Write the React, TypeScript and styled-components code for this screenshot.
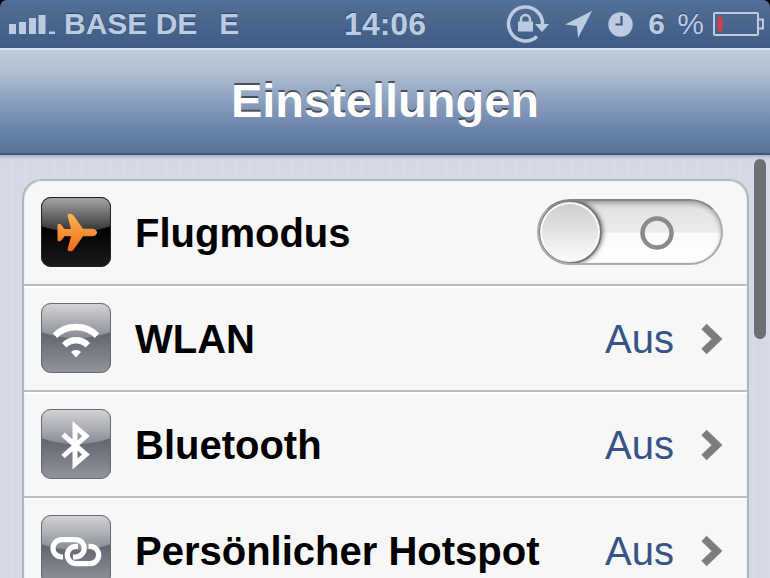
import React, { useState } from "react";
import type { ReactNode } from "react";
import styled, { createGlobalStyle } from "styled-components";

const GlobalStyle = createGlobalStyle`
  *, *::before, *::after { box-sizing: border-box; }
  body {
    margin: 0;
    background: #000;
    font-family: "Liberation Sans", Arial, sans-serif;
  }
`;

const Screen = styled.div`
  display: flex;
  flex-direction: column;
  height: 100vh;
  overflow: hidden;
`;

const StatusBar = styled.header`
  flex: none;
  display: grid;
  grid-template-columns: 1fr auto 1fr;
  align-items: center;
  height: 48px;
  padding: 0 6px;
  border-radius: 7px 7px 0 0;
  background: linear-gradient(#52719a 0%, #4f6c92 15%, #3f5c86 100%);
  color: #bccbe0;
  font-size: 30px;
  font-weight: bold;
  line-height: 48px;
  white-space: nowrap;
  text-shadow: 0 -1px 1px rgba(20, 40, 75, 0.6);

  svg { display: block; flex: none; }
`;

const StatusGroup = styled.div<{ $end?: boolean }>`
  display: flex;
  align-items: center;
  justify-content: ${(p) => (p.$end ? "flex-end" : "flex-start")};
  padding-left: ${(p) => (p.$end ? "0" : "3px")};
`;

const Carrier = styled.span`
  margin: 0 22px 0 7px;
`;

const Clock = styled.time`
  font-size: 32px;
`;

const Indicators = styled.div`
  display: flex;
  align-items: center;
  gap: 15px;
`;

const Battery = styled.div`
  display: flex;
  align-items: center;
  gap: 9px;
`;

const Percent = styled.span`
  margin-left: 4px;
  font-weight: normal;
`;

const NavBar = styled.div`
  flex: none;
  display: flex;
  align-items: center;
  justify-content: center;
  height: 107px;
  padding-bottom: 2px;
  border-top: 2px solid #d9e3f0;
  border-bottom: 2px solid #3d5880;
  background: linear-gradient(#bfccda 0%, #b3c1d3 20%, #8a9ebe 50%, #6c86ab 75%, #577399 100%);
`;

const Title = styled.h1`
  margin: 0;
  color: #fff;
  font-size: 47px;
  line-height: 56px;
  text-shadow: 0 -2px 0 rgba(60, 64, 75, 0.85);
`;

const Content = styled.main`
  position: relative;
  flex: 1;
  min-height: 0;
  overflow: hidden;
  padding: 24px 21px 0 22px;
  background:
    linear-gradient(#a9b2c4 0, rgba(190, 197, 212, 0.5) 3px, transparent 6px),
    repeating-linear-gradient(90deg, #d4d9e5 0 10px, #d7dbe7 10px 14px);
`;

const ScrollThumb = styled.div`
  position: absolute;
  top: 4px;
  right: 4px;
  width: 12px;
  height: 180px;
  border-radius: 6px;
  background: #6b7073;
`;

const Group = styled.ul`
  margin: 0;
  padding: 0;
  list-style: none;
  overflow: hidden;
  border: 2px solid #b1b4bd;
  border-top-width: 1px;
  border-radius: 20px;
  background: #f7f7f7;
  box-shadow: inset 0 1px 1px #b5b7bc;
`;

const Item = styled.li`
  border-bottom: 2px solid #bdbec0;

  & + & { box-shadow: inset 0 2px 0 #fff; }
`;

const rowLayout = `
  display: flex;
  align-items: center;
  width: 100%;
  min-height: 104px;
  padding: 0 24px 0 17px;
  gap: 24px;
  border: 0;
  background: none;
  color: #000;
  font: bold 40px/46px "Liberation Sans", Arial, sans-serif;
  text-align: left;
  cursor: pointer;
`;

const ToggleRow = styled.label`${rowLayout}`;
const LinkRow = styled.button`${rowLayout}`;

const Name = styled.span`
  flex: 1;
  padding-top: 2px;
  white-space: nowrap;
`;

const Detail = styled.span`
  display: flex;
  align-items: center;
  gap: 27px;
  padding-top: 2px;
  color: #385487;
  font-weight: normal;
`;

const IconBox = styled.svg`
  display: block;
  flex: none;
  width: 70px;
  height: 70px;
`;

const HiddenCheckbox = styled.input`
  position: absolute;
  opacity: 0;
  width: 1px;
  height: 1px;
`;

const Track = styled.span<{ $on: boolean }>`
  display: flex;
  align-items: center;
  flex-direction: ${(p) => (p.$on ? "row-reverse" : "row")};
  width: 186px;
  height: 66px;
  overflow: hidden;
  border: 2px solid #aaa;
  border-top-color: #858585;
  border-radius: 33px;
  background: linear-gradient(#cfcfcf 0%, #e4e4e4 14%, #ebebeb 50%, #fafafa 52%, #fff 100%);
  box-shadow: inset 0 2px 4px rgba(0, 0, 0, 0.25);
`;

const Knob = styled.span`
  flex: none;
  width: 64px;
  height: 64px;
  margin: 0 -1px;
  border: 2px solid #777;
  border-radius: 50%;
  background: linear-gradient(#cdcdcd, #fbfbfb);
  box-shadow: inset 0 0 0 2px #f8f8f8, 1px 0 4px rgba(0, 0, 0, 0.5);
`;

const State = styled.span`
  display: flex;
  flex: 1;
  justify-content: center;
  padding-top: 2px;

  svg { display: block; margin-right: 8px; }
`;

function SignalIcon() {
  return (
    <svg width="48" height="20" viewBox="0 0 48 20" fill="currentColor" role="img" aria-label="Signal">
      <path d="M0 10h7v10H0zM10 8h7v12h-7zM20 4h7v16h-7zM29.500 1h7v19h-7zM40 17.500h6V20h-6z" />
    </svg>
  );
}

function RotationLockIcon() {
  return (
    <svg width="43" height="38" viewBox="0 0 43 38" role="img" aria-label="Ausrichtungssperre">
      <path d="M36.500 20A17 17 0 1 0 31 31.500" fill="none" stroke="currentColor" strokeWidth="3.500" />
      <path d="M29 19h14l-7 8z" fill="currentColor" />
      <path d="M12 16.500h15v10H12z" fill="currentColor" />
      <path d="M15 17v-2.500a4.500 4.500 0 0 1 9 0V17" fill="none" stroke="currentColor" strokeWidth="2.500" />
    </svg>
  );
}

function LocationIcon() {
  return (
    <svg width="29" height="30" viewBox="0 0 29 30" fill="currentColor" role="img" aria-label="Ortung">
      <path d="M1 15.500L28 2L14 29L13 17z" />
    </svg>
  );
}

function AlarmIcon() {
  return (
    <svg width="25" height="25" viewBox="0 0 25 25" role="img" aria-label="Wecker">
      <circle cx="12.500" cy="12.500" r="12.200" fill="currentColor" />
      <path d="M13.500 4v8.500H7.500" fill="none" stroke="#3f5a82" strokeWidth="2.200" />
    </svg>
  );
}

function BatteryIcon() {
  return (
    <svg width="51" height="24" viewBox="0 0 51 24" role="img" aria-label="Batterie">
      <rect x="1" y="1" width="44" height="22" rx="1" fill="none" stroke="currentColor" strokeWidth="2" />
      <path d="M45 7.500h5v9h-5" fill="none" stroke="currentColor" strokeWidth="2" />
      <path d="M4.500 5h5v14.500h-5z" fill="#d0404c" />
    </svg>
  );
}

function Chevron() {
  return (
    <svg width="22" height="32" viewBox="0 0 22 32" aria-hidden="true">
      <path d="M3 3.500L16 16L3 28.500" fill="none" stroke="#7d7d7d" strokeWidth="7.500" />
    </svg>
  );
}

function AppIcon({ id, dark, children }: { id: string; dark?: boolean; children: ReactNode }) {
  return (
    <IconBox viewBox="0 0 70 70" aria-hidden="true">
      <defs>
        <linearGradient id={`${id}-base`} x1="0" y1="0" x2="0" y2="1">
          <stop offset="0.450" stopColor={dark ? "#000" : "#646771"} />
          <stop offset="1" stopColor={dark ? "#1c1c1c" : "#92959b"} />
        </linearGradient>
        <linearGradient id={`${id}-gloss`} x1="0" y1="0" x2="0" y2="1">
          <stop offset="0" stopColor={dark ? "#a8a8a8" : "#d5d6da"} />
          <stop offset="1" stopColor={dark ? "#303030" : "#888b93"} />
        </linearGradient>
        <clipPath id={`${id}-clip`}>
          <rect width="70" height="70" rx="10" />
        </clipPath>
      </defs>
      <g clipPath={`url(#${id}-clip)`}>
        <rect width="70" height="70" fill={`url(#${id}-base)`} />
        <path d="M0 0H70V29Q35 41 0 29Z" fill={`url(#${id}-gloss)`} />
      </g>
      <rect x="0.500" y="0.500" width="69" height="69" rx="9.500" fill="none" stroke={dark ? "#222" : "#686b70"} />
      {children}
    </IconBox>
  );
}

function AirplaneIcon() {
  return (
    <AppIcon id="plane" dark>
      <defs>
        <linearGradient id="plane-fill" x1="0" y1="0" x2="0" y2="1">
          <stop offset="0" stopColor="#fbb650" />
          <stop offset="1" stopColor="#f26a1b" />
        </linearGradient>
      </defs>
      <path
        fill="url(#plane-fill)"
        d="M16.500 28Q16.500 27 17.500 27H19.500L23.500 32H30L26.500 18.500Q26.500 16.700 29 16.700Q31.500 16.700 32.500 18.500L42 31.700H51.500Q56 32.500 56 35.500Q56 38.500 51.500 39.300H42L32.500 52.800Q31.500 54.300 29 54.300Q26.500 54.300 26.500 52.500L30 39.300H23.500L19.500 44.300H17.500Q16.500 44.300 16.500 43.300Z"
      />
    </AppIcon>
  );
}

function WifiIcon() {
  return (
    <AppIcon id="wifi">
      <g fill="none" stroke="#fff" strokeWidth="6.400">
        <path d="M14 32.600A30 30 0 0 1 56 32.600" />
        <path d="M23.200 42.200A16.700 16.700 0 0 1 46.800 42.200" />
      </g>
      <path d="M35 54.500L30 49A7.200 7.200 0 0 1 40 49Z" fill="#fff" />
    </AppIcon>
  );
}

function BluetoothIcon() {
  return (
    <AppIcon id="bluetooth">
      <path d="M22 25.500L45 45.500L34 55V17.500L45 27L22 47.500" fill="none" stroke="#fff" strokeWidth="5" />
    </AppIcon>
  );
}

function HotspotIcon() {
  return (
    <AppIcon id="hotspot">
      <g fill="none" stroke="#fff" strokeWidth="5.200">
        <path d="M22 42H20.700A8.700 8.700 0 0 1 20.700 24.600H34.500A8.700 8.700 0 0 1 34.500 42H32" />
        <path d="M37 31.300H35A8.700 8.700 0 0 0 35 48.700H49A8.700 8.700 0 0 0 49 31.300H47.500" />
      </g>
    </AppIcon>
  );
}

const links = [
  { name: "WLAN", value: "Aus", icon: <WifiIcon /> },
  { name: "Bluetooth", value: "Aus", icon: <BluetoothIcon /> },
  { name: "Persönlicher Hotspot", value: "Aus", icon: <HotspotIcon /> },
];

export default function App() {
  const [airplane, setAirplane] = useState(false);

  return (
    <Screen>
      <GlobalStyle />
      <StatusBar>
        <StatusGroup>
          <SignalIcon />
          <Carrier>BASE DE</Carrier>
          <span>E</span>
        </StatusGroup>
        <Clock>14:06</Clock>
        <StatusGroup $end>
          <Indicators>
            <RotationLockIcon />
            <LocationIcon />
            <AlarmIcon />
            <Battery>
              <span>6 <Percent>%</Percent></span>
              <BatteryIcon />
            </Battery>
          </Indicators>
        </StatusGroup>
      </StatusBar>
      <NavBar>
        <Title>Einstellungen</Title>
      </NavBar>
      <Content>
        <Group>
          <Item>
            <ToggleRow>
              <AirplaneIcon />
              <Name>Flugmodus</Name>
              <HiddenCheckbox
                type="checkbox"
                role="switch"
                checked={airplane}
                onChange={(e) => setAirplane(e.target.checked)}
              />
              <Track $on={airplane}>
                <Knob />
                <State>
                  <svg width="34" height="34" viewBox="0 0 34 34" aria-hidden="true">
                    {airplane ? (
                      <path d="M17 2V32" stroke="#888" strokeWidth="4.500" />
                    ) : (
                      <circle cx="17" cy="17" r="14.500" fill="none" stroke="#8a8a8a" strokeWidth="4.500" />
                    )}
                  </svg>
                </State>
              </Track>
            </ToggleRow>
          </Item>
          {links.map((link) => (
            <Item key={link.name}>
              <LinkRow type="button">
                {link.icon}
                <Name>{link.name}</Name>
                <Detail>
                  {link.value}
                  <Chevron />
                </Detail>
              </LinkRow>
            </Item>
          ))}
        </Group>
        <ScrollThumb />
      </Content>
    </Screen>
  );
}
